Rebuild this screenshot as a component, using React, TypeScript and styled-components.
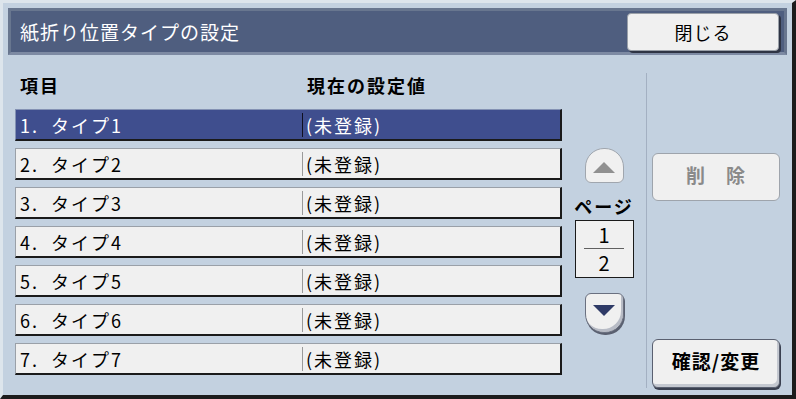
import * as React from 'react';
import styled, { createGlobalStyle } from 'styled-components';

const GlobalStyle = createGlobalStyle`
  html, body {
    margin: 0;
    padding: 0;
    background: #c3d1e0;
  }
  body {
    font-family: "Noto Sans CJK JP", "Noto Sans", sans-serif;
  }
`;

const Screen = styled.div`
  width: 796px;
  height: 399px;
  box-sizing: border-box;
  background: #c3d1e0;
  border-top: 3px solid #dde5ec;
  border-left: 3px solid #dde5ec;
  border-right: 4px solid #1c1c1c;
  border-bottom: 4px solid #1c1c1c;
  display: flex;
  flex-direction: column;
`;

const Header = styled.div`
  margin: 5px 5px 0 5px;
  height: 47px;
  box-sizing: border-box;
  background: #4f5e7f;
  border: 3px solid #68768f;
  border-bottom-color: #7d8aa3;
  display: flex;
  align-items: center;
  justify-content: space-between;
  padding: 0 5px 0 9px;
`;

const Title = styled.div`
  color: #ffffff;
  font-size: 19px;
  letter-spacing: 1px;
  line-height: 1;
`;

const CloseButton = styled.button`
  width: 152px;
  height: 38px;
  margin-top: 1px;
  box-sizing: border-box;
  background: #f0f0f0;
  border: 1px solid #9aa0a8;
  border-radius: 4px;
  box-shadow: 2px 2px 0 #2e3444;
  font-family: inherit;
  font-size: 18px;
  letter-spacing: 1px;
  color: #000;
  padding: 0;
`;

const Body = styled.div`
  flex: 1;
  display: flex;
  padding-left: 12px;
`;

const ListColumn = styled.div`
  width: 547px;
  display: flex;
  flex-direction: column;
`;

const ListHead = styled.div`
  height: 54px;
  box-sizing: border-box;
  padding-top: 6px;
  display: flex;
  align-items: center;
  font-size: 18px;
  font-weight: bold;
  letter-spacing: 2px;
  color: #000;
`;

const ItemHead = styled.div`
  width: 287px;
  padding-left: 5px;
`;

const ValueHead = styled.div``;

const Rows = styled.div`
  display: flex;
  flex-direction: column;
  gap: 7px;
`;

const Row = styled.div<{ $selected?: boolean }>`
  height: 32px;
  box-sizing: border-box;
  display: flex;
  align-items: center;
  background: ${p => (p.$selected ? '#3f4e8e' : '#f0f0f0')};
  color: ${p => (p.$selected ? '#ffffff' : '#000000')};
  border-top: 1px solid ${p => (p.$selected ? '#8492b4' : '#9aa0a8')};
  border-left: 1px solid ${p => (p.$selected ? '#8492b4' : '#9aa0a8')};
  border-right: 2px solid #1a1a1a;
  border-bottom: 2px solid #1a1a1a;
  font-size: 18px;
  letter-spacing: 2px;
`;

const ItemCell = styled.div`
  width: 282px;
  padding-left: 4px;
  white-space: pre;
`;

const Divider = styled.div<{ $selected?: boolean }>`
  width: 1px;
  height: 24px;
  background: ${p => (p.$selected ? '#101020' : '#9a9a9a')};
  margin-right: 3px;
`;

const ValueCell = styled.div``;

const PagerColumn = styled.div`
  width: 84px;
  display: flex;
  flex-direction: column;
  align-items: center;
`;

const ArrowButton = styled.div<{ $dir: 'up' | 'down'; $disabled?: boolean }>`
  width: 39px;
  height: ${p => (p.$dir === 'up' ? '35px' : '40px')};
  margin-top: ${p => (p.$dir === 'up' ? '93px' : '15px')};
  box-sizing: border-box;
  background: #f0f0f0;
  border: 1px solid ${p => (p.$disabled ? '#a0a6ae' : '#6a7080')};
  border-radius: ${p =>
    p.$dir === 'up' ? '19px 19px 6px 6px / 19px 19px 6px 6px' : '6px 6px 19px 19px / 6px 6px 19px 19px'};
  box-shadow: ${p => (p.$disabled ? 'none' : 'inset -2px -3px 0 #b8bcc6, 1px 2px 0 #5a6070')};
  display: flex;
  align-items: center;
  justify-content: center;
  padding-top: ${p => (p.$dir === 'up' ? '4px' : '0')};
  padding-bottom: ${p => (p.$dir === 'down' ? '6px' : '0')};
`;

const PageLabel = styled.div`
  margin-top: 12px;
  height: 22px;
  line-height: 22px;
  font-size: 18px;
  font-weight: bold;
  letter-spacing: 2px;
  color: #000;
`;

const PageBox = styled.div`
  margin-top: 3px;
  width: 59px;
  height: 58px;
  box-sizing: border-box;
  background: #f0f0f0;
  border: 1px solid #1a1a1a;
  display: flex;
  flex-direction: column;
  align-items: center;
  justify-content: center;
  font-size: 20px;
  line-height: 24px;
  color: #000;
`;

const PageRule = styled.div`
  width: 40px;
  height: 1px;
  background: #606060;
  margin: 1px 0 2px;
`;

const Separator = styled.div`
  width: 1px;
  margin: 18px 0 7px;
  background: #a3b0c2;
`;

const ActionColumn = styled.div`
  width: 128px;
  margin-left: 5px;
  display: flex;
  flex-direction: column;
  justify-content: space-between;
  padding: 98px 0 7px;
`;

const ActionButton = styled.button<{ $disabled?: boolean }>`
  width: 128px;
  height: ${p => (p.$disabled ? '48px' : '49px')};
  box-sizing: border-box;
  background: #f0f0f0;
  border: 1px solid ${p => (p.$disabled ? '#9ea4ac' : '#5a6070')};
  border-radius: 6px;
  box-shadow: ${p => (p.$disabled ? 'none' : 'inset -2px -3px 0 #c4c8d0, 1px 2px 0 #3a4050')};
  font-family: inherit;
  font-size: 19px;
  font-weight: bold;
  letter-spacing: 1px;
  color: ${p => (p.$disabled ? '#8a8a8a' : '#000000')};
  padding: 0 0 6px;
  white-space: pre;
`;

const Triangle = ({ dir, color }: { dir: 'up' | 'down'; color: string }) => (
  <svg width="22" height="11" viewBox="0 0 22 11">
    {dir === 'up' ? (
      <polygon points="11,0 22,11 0,11" fill={color} />
    ) : (
      <polygon points="0,0 22,0 11,11" fill={color} />
    )}
  </svg>
);

const types = [1, 2, 3, 4, 5, 6, 7];

export default function App() {
  return (
    <>
      <GlobalStyle />
      <Screen>
        <Header>
          <Title>紙折り位置タイプの設定</Title>
          <CloseButton>閉じる</CloseButton>
        </Header>
        <Body>
          <ListColumn>
            <ListHead>
              <ItemHead>項目</ItemHead>
              <ValueHead>現在の設定値</ValueHead>
            </ListHead>
            <Rows>
              {types.map(n => (
                <Row key={n} $selected={n === 1}>
                  <ItemCell>{`${n}.  タイプ${n}`}</ItemCell>
                  <Divider $selected={n === 1} />
                  <ValueCell>(未登録)</ValueCell>
                </Row>
              ))}
            </Rows>
          </ListColumn>
          <PagerColumn>
            <ArrowButton $dir="up" $disabled>
              <Triangle dir="up" color="#909090" />
            </ArrowButton>
            <PageLabel>ページ</PageLabel>
            <PageBox>
              <span>1</span>
              <PageRule />
              <span>2</span>
            </PageBox>
            <ArrowButton $dir="down">
              <Triangle dir="down" color="#2e3a66" />
            </ArrowButton>
          </PagerColumn>
          <Separator />
          <ActionColumn>
            <ActionButton $disabled>{'削　除'}</ActionButton>
            <ActionButton>確認/変更</ActionButton>
          </ActionColumn>
        </Body>
      </Screen>
    </>
  );
}
